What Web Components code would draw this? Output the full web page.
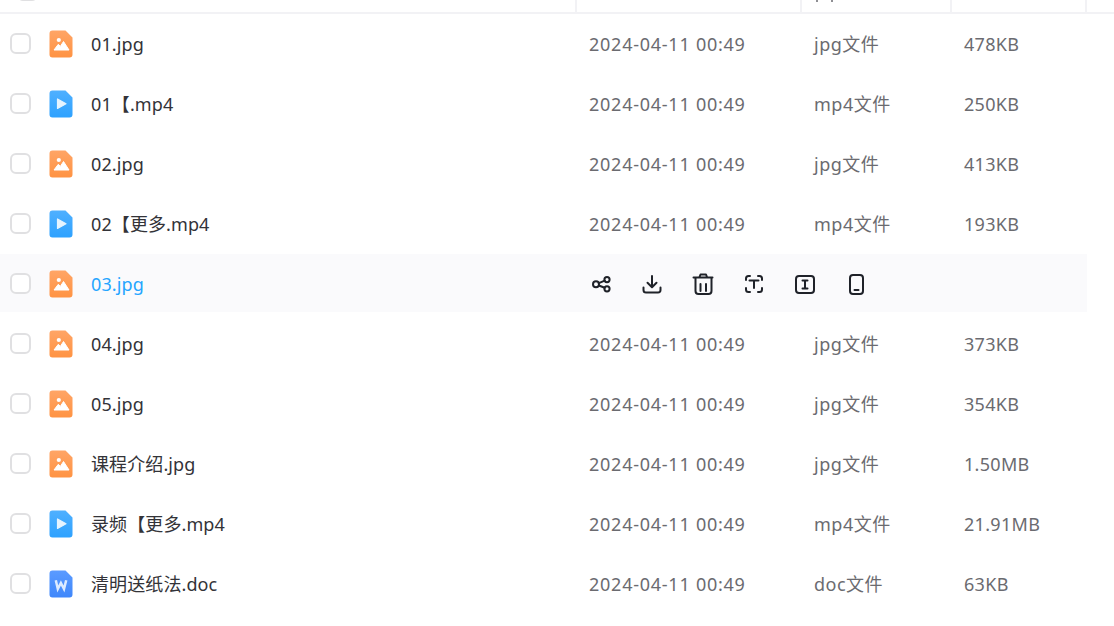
<!DOCTYPE html>
<html lang="zh">
<head>
<meta charset="utf-8">
<style>
  html, body { margin: 0; height: 100%; background: #fff; overflow: hidden; }
  body { font-family: "Noto Sans", "Noto Sans CJK SC", sans-serif; }
</style>
</head>
<body>
<file-table></file-table>

<template id="file-icon-image">
  <svg width="24" height="28" viewBox="0 0 24 28">
    <defs><linearGradient id="g" x1="0" y1="0" x2="0" y2="1"><stop offset="0" stop-color="#ffa566"/><stop offset="1" stop-color="#ff9343"/></linearGradient></defs>
    <path d="M3.500 .5H16.500L23.500 7.500V24.500a3 3 0 0 1-3 3H3.500a3 3 0 0 1-3-3V3.500a3 3 0 0 1 3-3Z" fill="url(#g)"/>
    <circle cx="9.800" cy="10" r="2.100" fill="#fff"/>
    <path d="M5 20 9.300 14.300 11.300 16.400 14.500 11.500 20 20Z" fill="#fff" stroke="#fff" stroke-linejoin="round"/>
  </svg>
</template>
<template id="file-icon-video">
  <svg width="24" height="28" viewBox="0 0 24 28">
    <defs><linearGradient id="g" x1="0" y1="0" x2="0" y2="1"><stop offset="0" stop-color="#4fb0ff"/><stop offset="1" stop-color="#2ea2ff"/></linearGradient></defs>
    <path d="M3.500 .5H16.500L23.500 7.500V24.500a3 3 0 0 1-3 3H3.500a3 3 0 0 1-3-3V3.500a3 3 0 0 1 3-3Z" fill="url(#g)"/>
    <path d="M8.500 9v9.500l8.500-4.750Z" fill="#e6f4ff" stroke="#e6f4ff" stroke-width="1.200" stroke-linejoin="round"/>
  </svg>
</template>
<template id="file-icon-word">
  <svg width="24" height="28" viewBox="0 0 24 28">
    <defs><linearGradient id="g" x1="0" y1="0" x2="0" y2="1"><stop offset="0" stop-color="#5b9bff"/><stop offset="1" stop-color="#3f87fb"/></linearGradient></defs>
    <path d="M3.500 .5H16.500L23.500 7.500V24.500a3 3 0 0 1-3 3H3.500a3 3 0 0 1-3-3V3.500a3 3 0 0 1 3-3Z" fill="url(#g)"/>
    <path d="M6.800 10.300 8.800 19 11.900 13 15 19 17.200 10.300" fill="none" stroke="#dcebff" stroke-width="2.500"/>
  </svg>
</template>

<script>
'use strict'

class FileCheck extends HTMLElement {
  constructor () {
    super()
    this.attachShadow({ mode: 'open' }).innerHTML = `
      <style>
        :host { display: block; flex: none; box-sizing: border-box; width: 21px; height: 21px; background: #fff; border: 2px solid #e0e0e2; border-radius: 6px; }
      </style>`
  }
}

class FileRow extends HTMLElement {
  connectedCallback () {
    if (this.shadowRoot) return
    const r = this.attachShadow({ mode: 'open' })
    const hover = this.hasAttribute('hover')
    const icon = document.getElementById('file-icon-' + this.getAttribute('kind')).content.cloneNode(true)
    r.innerHTML = `
      <style>
        :host { display: block; height: 60px; font-size: 18px; line-height: 24px; letter-spacing: .3px; }
        .row { display: grid; grid-template-columns: 577px 225px 150px 135px; width: 1087px; height: 60px; align-items: center; }
        :host([hover]) .row { background: linear-gradient(#fafafc, #fafafc) no-repeat top / 100% 58px; }
        .name { display: flex; align-items: center; padding-left: 10px; }
        file-check { margin-right: 18px; margin-bottom: 1px; }
        .icon { display: flex; width: 24px; height: 28px; margin-right: 18px; }
        .title { color: #333338; letter-spacing: .1px; }
        :host([hover]) .title { color: #25a5ff; }
        .cell { color: #6b6b70; padding-left: 12px; }
        .time { letter-spacing: .75px; }
        .type { letter-spacing: .5px; }
      </style>
      <div class="row">
        <div class="name"><file-check></file-check><span class="icon"></span><span class="title"></span></div>
        ${hover
          ? '<file-actions></file-actions>'
          : `<div class="cell time">2024-04-11 00:49</div>
             <div class="cell type">${this.getAttribute('type')}</div>
             <div class="cell">${this.getAttribute('size')}</div>`}
      </div>`
    r.querySelector('.icon').append(icon)
    r.querySelector('.title').textContent = this.getAttribute('name')
  }
}

class FileActions extends HTMLElement {
  constructor () {
    super()
    this.attachShadow({ mode: 'open' }).innerHTML = `
      <style>
        :host { display: flex; grid-column: 2 / 5; gap: 27px; padding-left: 12px; align-items: center; }
        svg { width: 24px; height: 24px; fill: none; stroke: #1f2229; stroke-width: 2; stroke-linecap: round; stroke-linejoin: round; }
      </style>
      <svg viewBox="0 0 24 24"><circle cx="7" cy="12.300" r="3"/><circle cx="18" cy="7.600" r="2.600"/><circle cx="18" cy="16.800" r="2.600"/><path d="M9.800 11.100 15.700 8.600M9.800 13.500l5.900 2.300"/></svg>
      <svg viewBox="0 0 24 24"><path d="M12 4V15M7.500 10.800 12 15.300l4.500-4.500M3.500 15.500V18a2.500 2.500 0 0 0 2.500 2.500h12a2.500 2.500 0 0 0 2.500-2.500v-2.500"/></svg>
      <svg viewBox="0 0 24 24"><path d="M2.500 5.500h19M8.500 5 9.500 2.500h5.500l1 2.500M4.500 6V19a3 3 0 0 0 3 3h10a3 3 0 0 0 3-3V6M9.500 12v7M15 12v7"/></svg>
      <svg viewBox="0 0 24 24"><path d="M8 4H6.500A2.500 2.500 0 0 0 4 6.500V8M16 4h1.500A2.500 2.500 0 0 1 20 6.500V8M4 16v1.500A2.500 2.500 0 0 0 6.500 20H8M20 16v1.500a2.500 2.500 0 0 1-2.500 2.500H16M7.500 8.500h9M12 8.500V16"/></svg>
      <svg viewBox="0 0 24 24"><rect x="3" y="4" width="18" height="17" rx="3"/><path d="M9.500 8.500h5M9.500 16.500h5M12 8.500v8"/></svg>
      <svg viewBox="0 0 24 24"><rect x="6" y="3" width="13" height="19" rx="3"/><path d="M10.500 18h4"/></svg>`
  }
}

class FileTable extends HTMLElement {
  constructor () {
    super()
    const rows = [
      ['01.jpg', 'image', 'jpg文件', '478KB'],
      ['01【.mp4', 'video', 'mp4文件', '250KB'],
      ['02.jpg', 'image', 'jpg文件', '413KB'],
      ['02【更多.mp4', 'video', 'mp4文件', '193KB'],
      ['03.jpg', 'image', '', '', true],
      ['04.jpg', 'image', 'jpg文件', '373KB'],
      ['05.jpg', 'image', 'jpg文件', '354KB'],
      ['课程介绍.jpg', 'image', 'jpg文件', '1.50MB'],
      ['录频【更多.mp4', 'video', 'mp4文件', '21.91MB'],
      ['清明送纸法.doc', 'word', 'doc文件', '63KB']
    ]
    const root = this.attachShadow({ mode: 'open' })
    root.innerHTML = `
      <style>
        :host { display: block; }
        .head { height: 14px; box-sizing: border-box; border-bottom: 2px solid #f2f2f5; }
        .cols { width: 1087px; height: 12px; display: grid; grid-template-columns: 577px 225px 150px 135px; overflow: hidden; }
        .cols > div { box-sizing: border-box; border-right: 2px solid #f2f2f5; }
        .first file-check { margin: -20px 0 0 17px; }
        .type { display: flex; gap: 13px; padding-left: 14px; }
        .type span { width: 2px; height: 2px; background: #8f8f94; }
      </style>
      <div class="head">
        <div class="cols">
          <div class="first"><file-check></file-check></div>
          <div></div>
          <div class="type"><span></span><span></span></div>
          <div></div>
        </div>
      </div>
      <div class="body"></div>`
    const body = root.querySelector('.body')
    for (const [name, kind, type, size, hover] of rows) {
      const row = document.createElement('file-row')
      row.setAttribute('name', name)
      row.setAttribute('kind', kind)
      row.setAttribute('type', type)
      row.setAttribute('size', size)
      if (hover) row.setAttribute('hover', '')
      body.append(row)
    }
  }
}

customElements.define('file-check', FileCheck)
customElements.define('file-actions', FileActions)
customElements.define('file-row', FileRow)
customElements.define('file-table', FileTable)
</script>
</body>
</html>
